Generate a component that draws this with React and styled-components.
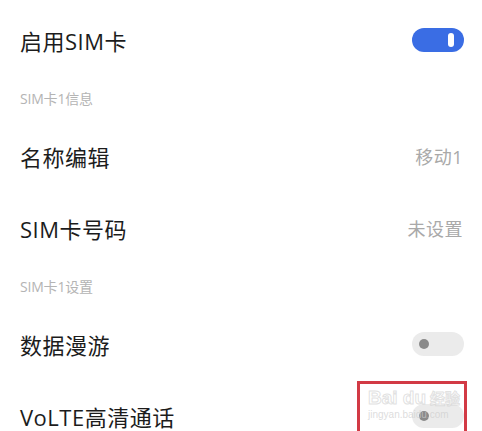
import React from "react";
import styled, { createGlobalStyle } from "styled-components";

const Global = createGlobalStyle`
  html, body { margin: 0; padding: 0; background: #ffffff; }
  body { font-family: "Open Sans", "Noto Sans CJK SC", sans-serif; }
`;

const Page = styled.div`
  width: 482px;
  height: 431px;
  overflow: hidden;
  position: relative;
  padding-top: 4px;
  box-sizing: border-box;
  background: #fff;
`;

const Row = styled.div`
  height: 72px;
  display: flex;
  align-items: center;
  justify-content: space-between;
  padding: 0 18px 0 20px;
`;

const Header = styled.div`
  height: 44px;
  display: flex;
  align-items: center;
  padding-left: 20px;
  font-size: 14px;
  color: #b4b4b4;
  letter-spacing: -0.2px;
`;

const Label = styled.span`
  font-size: 22px;
  color: #1c1c1c;
  letter-spacing: 0.5px;
  font-family: "Open Sans", "Noto Sans CJK SC", sans-serif;
`;

const Value = styled.span`
  font-size: 18px;
  color: #a9a9a9;
  letter-spacing: 0.5px;
  margin-right: 1px;
`;

const Toggle = styled.div`
  width: 52px;
  height: 24px;
  border-radius: 12px;
  background: ${(p) => (p.on ? "#3a6de4" : "#ebebeb")};
  position: relative;
  flex: none;
`;

const KnobOn = styled.div`
  position: absolute;
  right: 10px;
  top: 5px;
  width: 6px;
  height: 14px;
  border-radius: 3px;
  background: #fff;
`;

const KnobOff = styled.div`
  position: absolute;
  left: 7px;
  top: 7px;
  width: 10px;
  height: 10px;
  border-radius: 50%;
  background: #8a8a8a;
`;

const RedBox = styled.div`
  position: absolute;
  left: 357px;
  top: 381px;
  width: 104px;
  height: 60px;
  border: 3px solid #d23a45;
  pointer-events: none;
`;

const Watermark = styled.div`
  position: absolute;
  left: 8px;
  top: 4px;
  display: flex;
  flex-direction: column;
  font-family: "Liberation Sans", sans-serif;
  line-height: 1;
`;

const WmTop = styled.div`
  display: flex;
  align-items: center;
  gap: 4px;
  font-size: 19px;
  font-weight: bold;
  -webkit-text-stroke: 1px rgba(200, 200, 200, 0.55);
  color: rgba(255, 255, 255, 0.6);
`;

const WmCn = styled.span`
  font-size: 15px;
  font-family: "Noto Sans CJK SC", sans-serif;
`;

const WmSmall = styled.div`
  font-size: 10px;
  margin-top: 3px;
  color: rgba(205, 205, 205, 0.7);
`;

const Switch = ({ on }) => (
  <Toggle on={on ? 1 : 0}>{on ? <KnobOn /> : <KnobOff />}</Toggle>
);

export default function App() {
  return (
    <Page>
      <Global />
      <Row>
        <Label>启用SIM卡</Label>
        <Switch on />
      </Row>
      <Header>SIM卡1信息</Header>
      <Row>
        <Label>名称编辑</Label>
        <Value>移动1</Value>
      </Row>
      <Row>
        <Label>SIM卡号码</Label>
        <Value>未设置</Value>
      </Row>
      <Header>SIM卡1设置</Header>
      <Row>
        <Label>数据漫游</Label>
        <Switch />
      </Row>
      <Row>
        <Label>VoLTE高清通话</Label>
        <Switch />
      </Row>
      <RedBox>
        <Watermark>
          <WmTop>
            <span>Bai du</span>
            <WmCn>经验</WmCn>
          </WmTop>
          <WmSmall>jingyan.baidu.com</WmSmall>
        </Watermark>
      </RedBox>
    </Page>
  );
}
